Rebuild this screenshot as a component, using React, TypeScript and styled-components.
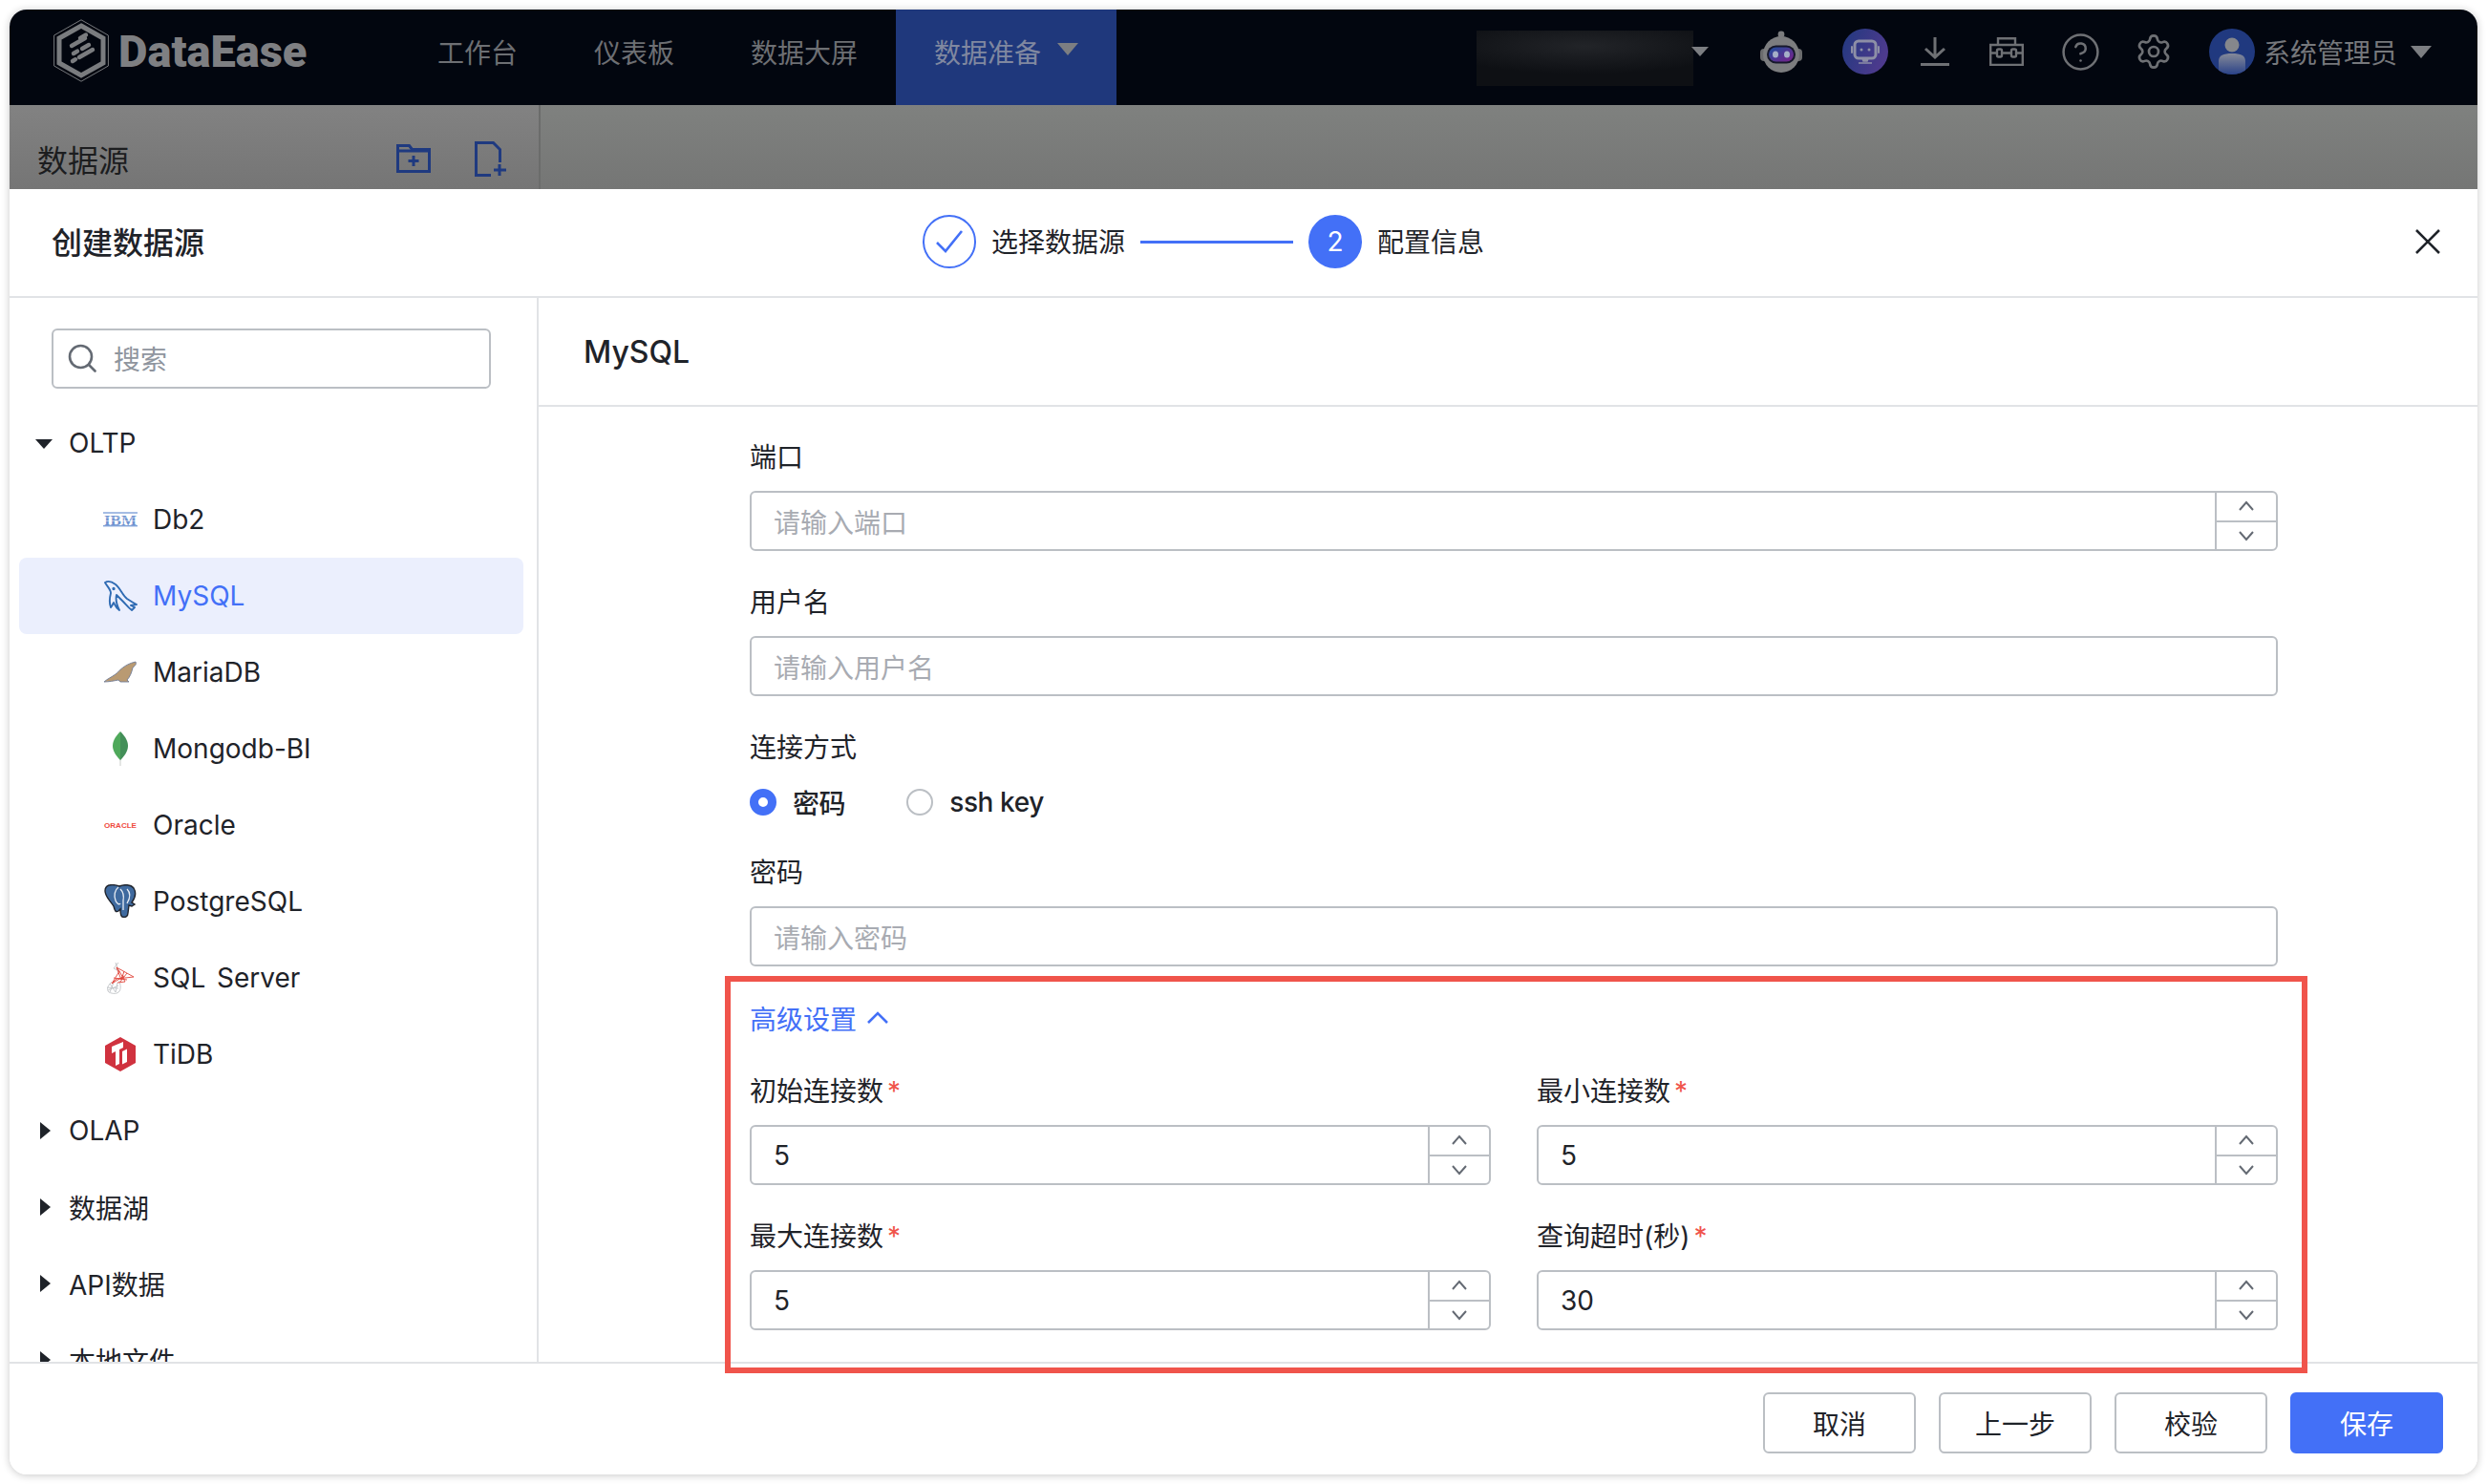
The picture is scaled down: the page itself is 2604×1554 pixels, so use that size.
import React from "react";
import styled, { createGlobalStyle } from "styled-components";
import { Settings, CircleHelp } from "lucide-react";

const Global = createGlobalStyle`
  html, body { margin: 0; padding: 0; background: #fff; }
  * { box-sizing: border-box; }
  body { font-family: Inter, "Noto Sans CJK SC", sans-serif; color: #1f2329; font-size: 28px; }
`;

const BLUE = "#4370f7";
const BORDER = "#bbbfc4";

const Page = styled.div`
  width: 2604px;
  height: 1554px;
  padding: 10px;
  overflow: hidden;
`;
const Win = styled.div`
  position: relative;
  width: 2584px;
  height: 1534px;
  border-radius: 18px;
  overflow: hidden;
  display: flex;
  flex-direction: column;
  background: #fff;
  box-shadow: 0 1px 8px rgba(0, 0, 0, 0.22);
`;
const TopBar = styled.header`
  height: 100px;
  flex: none;
  background: #02060f;
  display: flex;
  align-items: stretch;
  color: #7d7f83;
`;
const LogoBox = styled.div`
  width: 408px;
  padding: 0 0 14px 46px;
  display: flex;
  align-items: center;
  gap: 10px;
`;
const LogoText = styled.span`
  font-family: Roboto, sans-serif;
  font-weight: 900;
  font-size: 47px;
  letter-spacing: 0;
  color: #7e7f82;
  line-height: 1;
`;
const Nav = styled.nav`
  display: flex;
`;
const NavItem = styled.div<{ $active?: boolean }>`
  padding: 0 40px;
  display: flex;
  align-items: center;
  gap: 17px;
  padding-bottom: 12px;
  background: ${(p) => (p.$active ? "#1f387c" : "transparent")};
  color: ${(p) => (p.$active ? "#8088a0" : "#6d6f73")};
`;
const DownTri = styled.i<{ $c?: string; $w?: number }>`
  display: block;
  width: 0;
  height: 0;
  border-left: ${(p) => (p.$w ?? 10)}px solid transparent;
  border-right: ${(p) => (p.$w ?? 10)}px solid transparent;
  border-top: ${(p) => (p.$w ?? 10) * 1.2}px solid ${(p) => p.$c ?? "#7c7e82"};
`;
const NavTri = styled(DownTri)`
  margin-top: -6px;
`;
const Tools = styled.div`
  margin-left: auto;
  display: flex;
  align-items: center;
  padding-right: 48px;
  padding-bottom: 12px;
`;
const Blurred = styled.div`
  width: 227px;
  height: 58px;
  margin-top: 14px;
  background: radial-gradient(ellipse 70% 50% at 50% 28%, #222428 0%, #16181c 60%, #0e1014 100%);
`;
const BlurTri = styled(DownTri)`
  margin-left: -2px;
  margin-top: -1px;
`;
const Tool = styled.div<{ $ml: number }>`
  margin-left: ${(p) => p.$ml}px;
  display: flex;
  align-items: center;
  color: #6e7074;
`;
const UserName = styled.span`
  margin-left: 9px;
  color: #76787c;
`;
const UserTri = styled(DownTri)`
  margin-left: 14px;
  margin-top: 0;
`;
const Behind = styled.div`
  height: 88px;
  flex: none;
  display: flex;
  background: linear-gradient(#7f817f, #757675);
`;
const BehindLeft = styled.div`
  width: 556px;
  display: flex;
  align-items: center;
  padding: 0 34px 0 29px;
  background: linear-gradient(#828282, #757575);
  border-right: 2px solid #6b6c6b;
`;
const BehindTitle = styled.span`
  font-size: 32px;
  color: #1c1d1f;
  flex: 1;
  margin-top: 24px;
`;
const BehindIcons = styled.div`
  display: flex;
  align-items: center;
  gap: 46px;
  margin-top: 24px;
`;
const Dialog = styled.section`
  flex: 1;
  min-height: 0;
  display: flex;
  flex-direction: column;
  background: #fff;
`;
const DialogHead = styled.div`
  height: 114px;
  flex: none;
  display: flex;
  align-items: center;
  padding: 0 39px 2px 44px;
  border-bottom: 2px solid #e1e3e6;
`;
const DialogTitle = styled.h1`
  margin: 0;
  width: 160px;
  padding-top: 3px;
  font-size: 32px;
  font-weight: 500;
  line-height: 44px;
  color: #1f2329;
  white-space: nowrap;
`;
const Stepper = styled.div`
  margin-left: 752px;
  display: flex;
  align-items: center;
`;
const StepCircle = styled.div<{ $on?: boolean }>`
  width: 56px;
  height: 56px;
  border-radius: 50%;
  border: 2px solid ${BLUE};
  background: ${(p) => (p.$on ? BLUE : "#fff")};
  color: #fff;
  display: flex;
  align-items: center;
  justify-content: center;
`;
const StepLabel = styled.span`
  margin-left: 16px;
  line-height: 40px;
  padding-top: 2px;
`;
const StepLine = styled.div`
  width: 160px;
  height: 3px;
  background: ${BLUE};
  margin: 0 16px;
`;
const Close = styled.div`
  margin-left: auto;
  display: flex;
`;
const Body = styled.div`
  flex: 1;
  min-height: 0;
  display: flex;
`;
const Side = styled.aside`
  width: 554px;
  flex: none;
  border-right: 2px solid #e1e3e6;
  overflow: hidden;
  padding-top: 32px;
`;
const Search = styled.div`
  margin-left: 44px;
  width: 460px;
  height: 63px;
  border: 2px solid ${BORDER};
  border-radius: 6px;
  display: flex;
  align-items: center;
  padding: 0 0 2px 15px;
  gap: 18px;
  color: #8f959e;
`;
const Tree = styled.div`
  margin-top: 17px;
`;
const GroupRow = styled.div`
  height: 80px;
  display: flex;
  align-items: center;
  margin-left: 10px;
`;
const ArrowSlot = styled.div`
  width: 52px;
  display: flex;
  justify-content: center;
`;
const OpenArrow = styled.i`
  display: block;
  width: 0;
  height: 0;
  border-left: 9px solid transparent;
  border-right: 9px solid transparent;
  border-top: 10px solid #1f2329;
  margin-top: 2px;
`;
const ClosedArrow = styled.i`
  display: block;
  width: 0;
  height: 0;
  border-top: 9px solid transparent;
  border-bottom: 9px solid transparent;
  border-left: 11px solid #1f2329;
  margin-left: 3px;
`;
const LeafRow = styled.div<{ $active?: boolean }>`
  height: 80px;
  margin: 0 14px 0 10px;
  padding-left: 88px;
  border-radius: 8px;
  display: flex;
  align-items: center;
  background: ${(p) => (p.$active ? "#ebeffd" : "transparent")};
  color: ${(p) => (p.$active ? BLUE : "#1f2329")};
`;
const LeafIcon = styled.div`
  width: 36px;
  height: 40px;
  margin-right: 16px;
  display: flex;
  align-items: center;
  justify-content: center;
`;
const LeafText = styled.span`
  word-spacing: 4px;
`;
const Main = styled.main`
  flex: 1;
  min-width: 0;
  display: flex;
  flex-direction: column;
`;
const MainTitle = styled.div`
  height: 114px;
  flex: none;
  padding-left: 47px;
  display: flex;
  align-items: center;
  border-bottom: 2px solid #e1e3e6;
  font-size: 32px;
  font-weight: 500;
`;
const Form = styled.div`
  flex: 1;
  min-height: 0;
  overflow: hidden;
  padding: 31px 209px 0 221px;
`;
const Field = styled.div`
  margin-bottom: 32px;
`;
const Label = styled.div`
  height: 44px;
  line-height: 44px;
  margin-bottom: 13px;
`;
const Star = styled.span`
  color: #f0544b;
  margin-left: 4px;
`;
const Box = styled.div`
  height: 63px;
  border: 2px solid ${BORDER};
  border-radius: 6px;
  display: flex;
  align-items: center;
  overflow: hidden;
`;
const BoxText = styled.span<{ $ph?: boolean }>`
  flex: 1;
  padding-left: 23px;
  color: ${(p) => (p.$ph ? "#a8abb2" : "#1f2329")};
`;
const Spin = styled.div`
  width: 64px;
  height: 100%;
  flex: none;
  border-left: 2px solid ${BORDER};
  display: flex;
  flex-direction: column;
`;
const SpinCell = styled.div`
  flex: 1;
  display: flex;
  align-items: center;
  justify-content: center;
  & + & {
    border-top: 2px solid ${BORDER};
  }
`;
const RadioRow = styled.div`
  height: 44px;
  display: flex;
  align-items: center;
  margin-bottom: 30px;
`;
const Radio = styled.i<{ $on?: boolean }>`
  display: block;
  width: 28px;
  height: 28px;
  border-radius: 50%;
  border: ${(p) => (p.$on ? `9px solid ${BLUE}` : `2px solid ${BORDER}`)};
  background: #fff;
`;
const RadioText = styled.span`
  margin: 0 64px 0 17px;
  font-weight: 500;
  letter-spacing: -0.4px;
  &:last-child {
    margin-right: 0;
  }
`;
const Advanced = styled.div`
  height: 44px;
  margin-top: 2px;
  margin-bottom: 33px;
  display: flex;
  align-items: center;
  gap: 10px;
  color: ${BLUE};
`;
const Grid = styled.div`
  display: grid;
  grid-template-columns: 776px 776px;
  column-gap: 48px;
`;
const Foot = styled.footer`
  height: 118px;
  flex: none;
  border-top: 2px solid #e1e3e6;
  display: flex;
  justify-content: flex-end;
  gap: 24px;
  padding: 30px 36px 0 0;
`;
const Btn = styled.div<{ $primary?: boolean }>`
  width: 160px;
  height: 64px;
  border-radius: 6px;
  border: 2px solid ${(p) => (p.$primary ? BLUE : BORDER)};
  background: ${(p) => (p.$primary ? BLUE : "#fff")};
  color: ${(p) => (p.$primary ? "#fff" : "#1f2329")};
  display: flex;
  align-items: center;
  justify-content: center;
`;
const RedFrame = styled.div`
  position: absolute;
  left: 749px;
  top: 1012px;
  width: 1657px;
  height: 416px;
  border: 6px solid #f0544b;
  pointer-events: none;
`;

const Chevron = ({ up }: { up?: boolean }) => (
  <svg width="18" height="12" viewBox="0 0 18 12" fill="none" stroke="#646a73" strokeWidth="2">
    <path d={up ? "M2 10 9 2l7 8" : "M2 2l7 8 7-8"} />
  </svg>
);

const Num = ({ children }: { children: React.ReactNode }) => (
  <Box>
    <BoxText>{children}</BoxText>
    <Spin>
      <SpinCell><Chevron up /></SpinCell>
      <SpinCell><Chevron /></SpinCell>
    </Spin>
  </Box>
);

const Logo = () => (
  <svg width="58" height="66" viewBox="0 0 58 66" fill="none">
    <path d="M29 .8 57.4 17v32L29 65.2.6 49V17z" stroke="#77797c" strokeWidth="1" />
    <path d="M29 7 52 20v26L29 59 6 46V20z" stroke="#7a7c7f" strokeWidth="5" />
    <g stroke="#7a7c7f" strokeWidth="4.4" strokeLinecap="round">
      <path d="M28 20l6-3.500M19 28l14-8" />
      <path d="M21 36l4-2.400M30 31l7-4" />
      <path d="M20 44l3-1.800M27 40l14-8" />
    </g>
  </svg>
);

const Robot = () => (
  <svg width="44" height="44" viewBox="0 0 44 44">
    <defs>
      <linearGradient id="visor" x1="0" y1="0" x2="1" y2="1">
        <stop offset="0" stopColor="#1d4f9c" />
        <stop offset="1" stopColor="#7a1f8a" />
      </linearGradient>
    </defs>
    <circle cx="22" cy="4" r="3.400" fill="#7b7c7e" />
    <rect x="20.500" y="6" width="3" height="5" fill="#6f7072" />
    <rect x="0" y="19" width="44" height="13" rx="4" fill="#6a6b6d" />
    <circle cx="22" cy="25" r="19" fill="#7c7d7f" />
    <rect x="7" y="15.500" width="30" height="19" rx="9.500" fill="#16182b" />
    <rect x="9" y="17.500" width="26" height="15" rx="7.500" fill="url(#visor)" />
    <ellipse cx="16" cy="25" rx="3" ry="3.600" fill="#a5afc8" />
    <ellipse cx="28" cy="25" rx="3" ry="3.600" fill="#a5afc8" />
  </svg>
);

const ChatBot = () => (
  <svg width="48" height="48" viewBox="0 0 48 48">
    <defs>
      <linearGradient id="chatbg" x1="0" y1="0" x2="1" y2="0.4">
        <stop offset="0" stopColor="#21397f" />
        <stop offset="1" stopColor="#4d3a8d" />
      </linearGradient>
    </defs>
    <circle cx="24" cy="24" r="24" fill="url(#chatbg)" />
    <rect x="13" y="13" width="22" height="18" rx="4" fill="none" stroke="#8d8fa6" strokeWidth="3" />
    <rect x="9" y="18" width="2" height="8" rx="1" fill="#8d8fa6" />
    <rect x="37" y="18" width="2" height="8" rx="1" fill="#8d8fa6" />
    <circle cx="20" cy="22" r="1.500" fill="#8d8fa6" />
    <circle cx="28" cy="22" r="1.500" fill="#8d8fa6" />
    <path d="M21 31h6l-1 3h-4zM17 36h14" stroke="#8d8fa6" strokeWidth="1.600" fill="#8d8fa6" />
  </svg>
);

const Download = () => (
  <svg width="30" height="30" viewBox="0 0 30 30" fill="none" stroke="currentColor" strokeWidth="3">
    <path d="M15 0v21M5 12l10 9 10-9M0 28.500h30" />
  </svg>
);

const ToolBox = () => (
  <svg width="36" height="30" viewBox="0 0 36 30" fill="none" stroke="currentColor" strokeWidth="2.400">
    <path d="M1.200 8h33.600v21H1.200zM9 8V1.200h18V8M1.200 16.500h7M13 16.500h10M28 16.500h6.800" />
    <rect x="8" y="12.500" width="5" height="8" rx="1.500" />
    <rect x="23" y="12.500" width="5" height="8" rx="1.500" />
  </svg>
);

const Avatar = () => (
  <svg width="48" height="48" viewBox="0 0 48 48">
    <defs>
      <linearGradient id="bodyg" x1="0" y1="0" x2="0" y2="1">
        <stop offset="0" stopColor="#858a99" />
        <stop offset="1" stopColor="#2a4288" />
      </linearGradient>
      <clipPath id="avclip"><circle cx="24" cy="24" r="24" /></clipPath>
    </defs>
    <circle cx="24" cy="24" r="24" fill="#20397f" />
    <circle cx="24" cy="17" r="7.500" fill="#85878c" />
    <path d="M10 34c0-6 5-8 14-8s14 2 14 8v14H10z" fill="url(#bodyg)" clipPath="url(#avclip)" />
  </svg>
);

const FolderPlus = () => (
  <svg width="36" height="30" viewBox="0 0 36 30" fill="none" stroke="#1f3a80" strokeWidth="3">
    <path d="M1.500 28.500V1.500h12l3 4h18v23z" />
    <path d="M1.500 7h33" />
    <path d="M18 12v11M12.500 17.500h11" />
  </svg>
);

const FilePlus = () => (
  <svg width="33" height="37" viewBox="0 0 33 37" fill="none" stroke="#1f3a80" strokeWidth="3">
    <path d="M17 35.500H1.500v-34h18l7 7V22" />
    <path d="M26 24v12M20 30h13" />
  </svg>
);

const SearchIcon = () => (
  <svg width="30" height="30" viewBox="0 0 30 30" fill="none" stroke="#646a73" strokeWidth="2.600">
    <circle cx="13.500" cy="13.500" r="11.500" />
    <path d="M22 22l6.500 6.500" strokeLinecap="round" />
  </svg>
);

const CloseIcon = () => (
  <svg width="26" height="26" viewBox="0 0 26 26" fill="none" stroke="#1f2329" strokeWidth="2.600">
    <path d="M1 1l24 24M25 1 1 25" />
  </svg>
);

const CheckIcon = () => (
  <svg width="30" height="26" viewBox="0 0 30 26" fill="none" stroke={BLUE} strokeWidth="2.600">
    <path d="M2 14l9 9L28 2" />
  </svg>
);

const Ibm = () => (
  <svg width="36" height="16" viewBox="0 0 36 16">
    <text x="18" y="13.500" textAnchor="middle" fontFamily="'Liberation Serif', serif" fontWeight="700" fontSize="15" textLength="34" lengthAdjust="spacingAndGlyphs" fill="#6f93d0">IBM</text>
    <g stroke="#ffffff" strokeWidth="0.500">
      <path d="M0 6h36M0 9.500h36" />
    </g>
    <g stroke="#4a7bc8" strokeWidth="1">
      <path d="M0 1h36M0 14.800h36" />
    </g>
  </svg>
);

const Dolphin = () => (
  <svg width="36" height="34" viewBox="0 0 36 34" fill="none" stroke="#2f6bb3" strokeWidth="1.900" strokeLinejoin="round">
    <path d="M2 3C5 1 9 2 13 5c5 4 7 11 12 15 3 2 6 4 10 6l-6 1 4 2-3 3c-3-2-6-6-10-10-3-3-5-5-6-6-1 4-1 8 3 16-4-3-5-6-6-8-1 2-2 4-3 5-2-5-1-11 0-15C8 10 4 7 2 3Z" />
    <circle cx="11" cy="9.500" r="0.700" fill="#2f6bb3" />
  </svg>
);

const Seal = () => (
  <svg width="36" height="24" viewBox="0 0 36 24">
    <path d="M1 22c3-3 8-5 12-8s8-10 21-13c1 2 0 4-3 6-1 5-3 10-6 13l2 2h-9l-2-2c-5 1-10 2-15 2Z" fill="#b99a72" stroke="#717d97" strokeWidth="0.900" />
  </svg>
);

const Leaf = () => (
  <svg width="18" height="36" viewBox="0 0 18 36">
    <path d="M8.500 28 9.500 28 9.500 36 8.500 36Z" fill="#c9ceca" />
    <path d="M9 0C5 4 1 9 1 15c0 6 4 11 8 15Z" fill="#4fa95b" />
    <path d="M9 0c4 4 8 9 8 15 0 6-4 11-8 15Z" fill="#438f58" />
  </svg>
);

const Oracle = () => (
  <svg width="36" height="10" viewBox="0 0 36 10">
    <text x="18" y="8" textAnchor="middle" fontFamily="'Liberation Sans', sans-serif" fontWeight="700" fontSize="7.500" textLength="34" lengthAdjust="spacingAndGlyphs" fill="#ef4b3f">ORACLE</text>
  </svg>
);

const Pg = () => (
  <svg width="34" height="36" viewBox="0 0 34 36">
    <path d="M5 1c4-1 8 0 11 1 5-2 12-2 15 2 3 5 1 11-2 15l3 2-3 2-3-1-1 8c0 4-3 5-6 4-2-1-2-4-2-8l-2 2c-3 2-4-1-5-5C7 18 1 13 1 7c0-3 1-5 4-6Z" fill="#3f6a9f" stroke="#20242c" strokeWidth="1.400" />
    <path d="M15 3c-4 3-5 9-3 14 1 3 4 5 5 3M17 5c3 3 4 7 3 12v10M24 5c4 4 3 10 0 15" fill="none" stroke="#e8edf4" strokeWidth="1.300" />
  </svg>
);

const SqlServer = () => (
  <svg width="30" height="34" viewBox="0 0 30 34" fill="none" strokeWidth="0.900">
    <g stroke="#c0c3c6">
      <path d="M10 1l3 9M13 1l-5 6M8 7l6 3M6 21C2 25 0 29 3 32c4 2 9 2 11-1 2-3 1-7 0-11M1 27l12 1M4 23l6 9M8 22l-4 10M12 22l-2 10M2 30l11-5" />
    </g>
    <g stroke="#e0453b">
      <path d="M11 6l18 10-18 2-5 5 8-13zM14 10l6 11-8 1M19 10l-3 9M8 17l14 2M22 12l-7 9M11 6l5 13M6 23l13-8" />
    </g>
  </svg>
);

const Tidb = () => (
  <svg width="32" height="36" viewBox="0 0 32 36">
    <path d="M16 0 32 9v18l-16 9L0 27V9z" fill="#d0323f" />
    <path d="M7 10 19 5v6l-4 2v15l-4 2V15l-4 2z" fill="#fff" />
    <path d="M18 15l5-2.500V26l-5 2.500z" fill="#fff" />
  </svg>
);

const leaves: { name: string; icon: React.ReactNode; active?: boolean }[] = [
  { name: "Db2", icon: <Ibm /> },
  { name: "MySQL", icon: <Dolphin />, active: true },
  { name: "MariaDB", icon: <Seal /> },
  { name: "Mongodb-BI", icon: <Leaf /> },
  { name: "Oracle", icon: <Oracle /> },
  { name: "PostgreSQL", icon: <Pg /> },
  { name: "SQL Server", icon: <SqlServer /> },
  { name: "TiDB", icon: <Tidb /> },
];

const App = () => (
  <Page>
    <Global />
    <Win>
      <TopBar>
        <LogoBox>
          <Logo />
          <LogoText>DataEase</LogoText>
        </LogoBox>
        <Nav>
          <NavItem>工作台</NavItem>
          <NavItem>仪表板</NavItem>
          <NavItem>数据大屏</NavItem>
          <NavItem $active>
            数据准备
            <NavTri $w={11} />
          </NavItem>
        </Nav>
        <Tools>
          <Blurred />
          <BlurTri $w={9} />
          <Tool $ml={54}><Robot /></Tool>
          <Tool $ml={42}><ChatBot /></Tool>
          <Tool $ml={34}><Download /></Tool>
          <Tool $ml={42}><ToolBox /></Tool>
          <Tool $ml={38}><CircleHelp size={43} strokeWidth={1.4} /></Tool>
          <Tool $ml={35}><Settings size={40} strokeWidth={1.6} /></Tool>
          <Tool $ml={38}><Avatar /></Tool>
          <UserName>系统管理员</UserName>
          <UserTri $w={11} />
        </Tools>
      </TopBar>
      <Behind>
        <BehindLeft>
          <BehindTitle>数据源</BehindTitle>
          <BehindIcons>
            <FolderPlus />
            <FilePlus />
          </BehindIcons>
        </BehindLeft>
      </Behind>
      <Dialog>
        <DialogHead>
          <DialogTitle>创建数据源</DialogTitle>
          <Stepper>
            <StepCircle><CheckIcon /></StepCircle>
            <StepLabel>选择数据源</StepLabel>
            <StepLine />
            <StepCircle $on>2</StepCircle>
            <StepLabel>配置信息</StepLabel>
          </Stepper>
          <Close><CloseIcon /></Close>
        </DialogHead>
        <Body>
          <Side>
            <Search>
              <SearchIcon />
              搜索
            </Search>
            <Tree>
              <GroupRow>
                <ArrowSlot><OpenArrow /></ArrowSlot>
                OLTP
              </GroupRow>
              {leaves.map((l) => (
                <LeafRow key={l.name} $active={l.active}>
                  <LeafIcon>{l.icon}</LeafIcon>
                  <LeafText>{l.name}</LeafText>
                </LeafRow>
              ))}
              {["OLAP", "数据湖", "API数据", "本地文件"].map((g) => (
                <GroupRow key={g}>
                  <ArrowSlot><ClosedArrow /></ArrowSlot>
                  {g}
                </GroupRow>
              ))}
            </Tree>
          </Side>
          <Main>
            <MainTitle>MySQL</MainTitle>
            <Form>
              <Field>
                <Label>端口</Label>
                <Box>
                  <BoxText $ph>请输入端口</BoxText>
                  <Spin>
                    <SpinCell><Chevron up /></SpinCell>
                    <SpinCell><Chevron /></SpinCell>
                  </Spin>
                </Box>
              </Field>
              <Field>
                <Label>用户名</Label>
                <Box><BoxText $ph>请输入用户名</BoxText></Box>
              </Field>
              <Label>连接方式</Label>
              <RadioRow>
                <Radio $on />
                <RadioText>密码</RadioText>
                <Radio />
                <RadioText>ssh key</RadioText>
              </RadioRow>
              <Field>
                <Label>密码</Label>
                <Box><BoxText $ph>请输入密码</BoxText></Box>
              </Field>
              <Advanced>
                高级设置
                <svg width="24" height="14" viewBox="0 0 24 14" fill="none" stroke={BLUE} strokeWidth="2.600">
                  <path d="M2 12 12 2l10 10" />
                </svg>
              </Advanced>
              <Grid>
                <Field>
                  <Label>初始连接数<Star>*</Star></Label>
                  <Num>5</Num>
                </Field>
                <Field>
                  <Label>最小连接数<Star>*</Star></Label>
                  <Num>5</Num>
                </Field>
                <Field>
                  <Label>最大连接数<Star>*</Star></Label>
                  <Num>5</Num>
                </Field>
                <Field>
                  <Label>查询超时(秒)<Star>*</Star></Label>
                  <Num>30</Num>
                </Field>
              </Grid>
            </Form>
          </Main>
        </Body>
        <Foot>
          <Btn>取消</Btn>
          <Btn>上一步</Btn>
          <Btn>校验</Btn>
          <Btn $primary>保存</Btn>
        </Foot>
      </Dialog>
      <RedFrame />
    </Win>
  </Page>
);

export default App;
